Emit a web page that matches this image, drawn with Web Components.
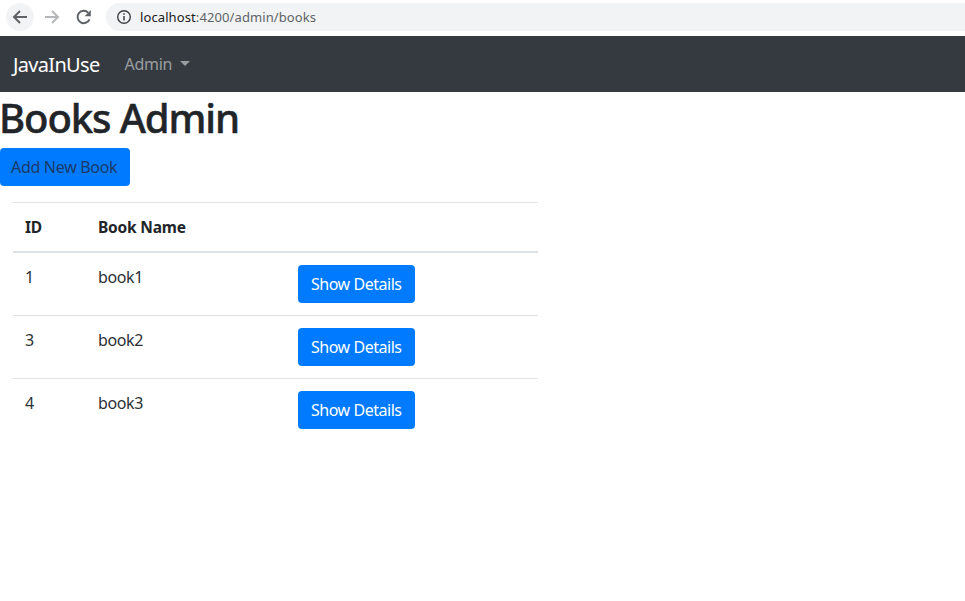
<!DOCTYPE html>
<html><head><meta charset="utf-8"><style>
html,body{margin:0;padding:0;background:#fff;overflow:hidden}
body{font-family:"Noto Sans","Open Sans",sans-serif;color:#212529;font-size:16px}
</style></head><body>
<browser-bar></browser-bar>
<app-nav></app-nav>
<books-admin></books-admin>
<script>
function def(name,html,init){customElements.define(name,class extends HTMLElement{constructor(){super();this.attachShadow({mode:'open'}).innerHTML=html;}connectedCallback(){init&&init(this)}})}
def('browser-bar',`<style>
:host{display:flex;align-items:center;height:36px;box-sizing:border-box;background:#fff;padding:3px 0 5px 6px}
.ic{width:28px;height:28px;display:flex;align-items:center;justify-content:center;flex:none;margin-right:4px}
.ic.hov{background:#f1f3f4;border-radius:50%}
.url{flex:1;height:28px;margin-left:4px;background:#f1f3f4;border-radius:14px 0 0 14px;display:flex;align-items:center;padding-left:10px;font-size:13px;gap:8px;color:#5f6368;letter-spacing:.1px}
b{font-weight:400;color:#202124}
</style>
<div class="ic hov"><svg width="18" height="18" viewBox="0 0 18 18"><path d="M16 9H3.500M9 3 3 9l6 6" fill="none" stroke="#5f6368" stroke-width="2"/></svg></div>
<div class="ic"><svg width="18" height="18" viewBox="0 0 18 18"><path d="M2 9H14.500M9 3l6 6-6 6" fill="none" stroke="#b4b6b9" stroke-width="2"/></svg></div>
<div class="ic"><svg width="18" height="18" viewBox="0 0 18 18"><path d="M14.500 11.300A6.200 6.200 0 1 1 13.200 4.600" fill="none" stroke="#5f6368" stroke-width="2"/><path d="M15.800 2v6.200H9.600z" fill="#5f6368"/></svg></div>
<div class="url"><svg width="16" height="16" viewBox="0 0 16 16"><circle cx="8" cy="8" r="6.300" fill="none" stroke="#3c4043" stroke-width="1.400"/><path d="M8 7v4.500M8 4.300v1.500" stroke="#3c4043" stroke-width="1.500"/></svg><span><b>localhost</b>:4200/admin/books</span></div>`);
def('app-nav',`<style>
:host{display:flex;align-items:center;height:56px;background:#343a40;padding-left:13px;box-sizing:border-box}
.brand{font-size:20px;color:#fff;margin-right:24px;letter-spacing:-.68px}
.item{color:rgba(255,255,255,.5);font-size:16px;display:flex;align-items:center;letter-spacing:-.3px;margin:-1px 0 0 1px}
.caret{margin-left:8px;width:0;height:0;border-top:5px solid rgba(255,255,255,.5);border-left:5px solid transparent;border-right:5px solid transparent}
</style><span class="brand">JavaInUse</span><span class="item">Admin<i class="caret"></i></span>`);
def('app-btn',`<style>
:host{display:inline-flex;align-items:center;justify-content:center;height:38px;box-sizing:border-box;padding:0 13px;background:#007bff;border-radius:4px;font-size:16px;color:var(--c,#fff);letter-spacing:-.47px;white-space:nowrap}
</style><slot></slot>`);
def('book-row',`<style>
:host{display:grid;grid-template-columns:73px 200px 1fr;border-top:1px solid #dee2e6;height:63px;box-sizing:border-box;align-items:start;padding-top:12px;letter-spacing:-.4px;color:#2b3035}
span{padding-left:12px;line-height:24px}
div{padding-left:12px}
</style><span id="a"></span><span id="b"></span><div><app-btn>Show Details</app-btn></div>`,el=>{
el.shadowRoot.getElementById('a').textContent=el.getAttribute('book-id');
el.shadowRoot.getElementById('b').textContent=el.getAttribute('name');});
def('books-admin',`<style>
:host{display:block}
h1{margin:0 0 3px -1px;font-size:40px;font-weight:500;line-height:48px;padding-top:2px;height:53px;box-sizing:border-box;letter-spacing:-1.1px;color:#212529;-webkit-text-stroke:.5px #212529}
.add{--c:#1b3a66;display:flex}
.table{width:525px;margin:16px 0 0 13px}
.head{display:grid;grid-template-columns:73px 200px 1fr;border-top:1px solid #dee2e6;border-bottom:2px solid #dee2e6;height:51px;box-sizing:border-box;align-items:center;font-weight:700;letter-spacing:-.2px;font-size:15.500px}
.head span{padding-left:12px}
.rows book-row:first-child{border-top:0;height:62px}
</style>
<h1>Books Admin</h1>
<div class="add"><app-btn style="padding:0 13px 0 11px;letter-spacing:-.3px">Add New Book</app-btn></div>
<div class="table">
<div class="head"><span>ID</span><span>Book Name</span><span></span></div>
<div class="rows">
<book-row book-id="1" name="book1"></book-row>
<book-row book-id="3" name="book2"></book-row>
<book-row book-id="4" name="book3"></book-row>
</div></div>`);
</script>
</body></html>
